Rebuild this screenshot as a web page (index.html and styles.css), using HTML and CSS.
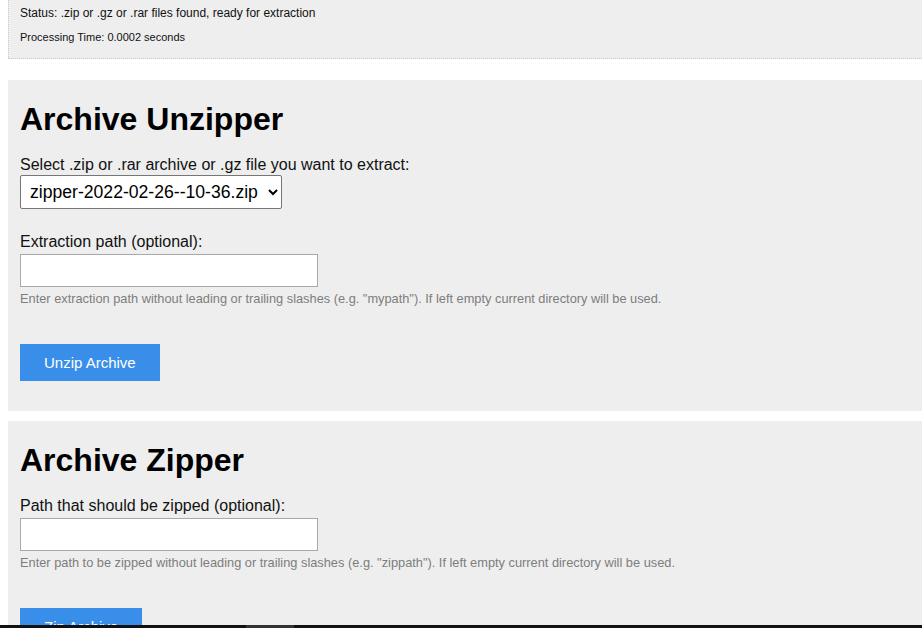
FILE: index.html
```html
<!DOCTYPE html>
<html lang="en">
<head>
<meta charset="utf-8">
<title>Archive Unzipper</title>
<link rel="stylesheet" href="styles.css">
</head>
<body>
<div class="status">
  <p class="status-line">Status: .zip or .gz or .rar files found, ready for extraction</p>
  <p class="status-time">Processing Time: 0.0002 seconds</p>
</div>

<section class="panel">
  <h1 class="panel-title">Archive Unzipper</h1>
  <label class="field-label first" for="zipfile">Select .zip or .rar archive or .gz file you want to extract:</label>
  <select class="field-select" id="zipfile">
    <option>zipper-2022-02-26--10-36.zip</option>
  </select>
  <label class="field-label" for="extpath">Extraction path (optional):</label>
  <input class="field-input" type="text" id="extpath">
  <p class="field-help">Enter extraction path without leading or trailing slashes (e.g. "mypath"). If left empty current directory will be used.</p>
  <button class="action-btn" type="button">Unzip Archive</button>
</section>

<section class="panel">
  <h1 class="panel-title">Archive Zipper</h1>
  <label class="field-label first" for="zippath">Path that should be zipped (optional):</label>
  <input class="field-input" type="text" id="zippath">
  <p class="field-help">Enter path to be zipped without leading or trailing slashes (e.g. "zippath"). If left empty current directory will be used.</p>
  <button class="action-btn" type="button">Zip Archive</button>
</section>

<div class="hscroll"><div class="hscroll-thumb"></div></div>
</body>
</html>
```
FILE: styles.css
```css
html, body {
  margin: 0;
  padding: 0;
}
body {
  margin-left: 8px;
  font-family: "Liberation Sans", Arial, sans-serif;
  color: #111;
  background: #fff;
  overflow: hidden;
}
.status {
  margin-top: -20px;
  padding: 25px 11px 14px;
  background: #eeeeee;
  border: 1px dotted #c8c8c8;
  border-right: none;
}
.status p {
  margin: 0;
}
.status-line {
  font-size: 12px;
  line-height: 14px;
}
.status-time {
  margin-top: 11px !important;
  font-size: 11px;
  line-height: 13px;
}
.panel {
  margin-top: 21px;
  background: #eeeeee;
  padding: 21px 12px 30px;
  display: flex;
  flex-direction: column;
  align-items: flex-start;
}
.panel + .panel {
  margin-top: 10px;
}
.panel-title {
  margin: 0;
  font-size: 32px;
  line-height: 37px;
  font-weight: bold;
  color: #000;
}
.field-label {
  display: block;
  margin-top: 24px;
  font-size: 16px;
  line-height: 18px;
}
.field-label.first {
  margin-top: 18px;
}
.field-select {
  margin-top: 1px;
  width: 262px;
  height: 34px;
  font-family: "Liberation Sans", Arial, sans-serif;
  font-size: 17.6px;
  color: #000;
  padding: 0 2px 0 5px;
  background: #fff;
  border: 1px solid #767676;
  border-radius: 2px;
}
.field-input {
  margin-top: 3px;
  width: 298px;
  height: 33px;
  box-sizing: border-box;
  border: 1px solid #a9a9a9;
  background: #fff;
  padding: 0 6px;
  font-size: 16px;
}
.field-help {
  margin: 4px 0 0;
  font-size: 12.8px;
  line-height: 15px;
  color: #7d7d7d;
}
.action-btn {
  margin-top: 38px;
  height: 37px;
  padding: 0 24px;
  border: none;
  background: #388ee8;
  color: #fff;
  font-family: "Liberation Sans", Arial, sans-serif;
  font-size: 15px;
}
.hscroll {
  position: fixed;
  left: 0;
  right: 0;
  bottom: 0;
  height: 3px;
  background: #111;
}
.hscroll-thumb {
  margin-left: 246px;
  width: 48px;
  height: 3px;
  background: #333;
}
```
